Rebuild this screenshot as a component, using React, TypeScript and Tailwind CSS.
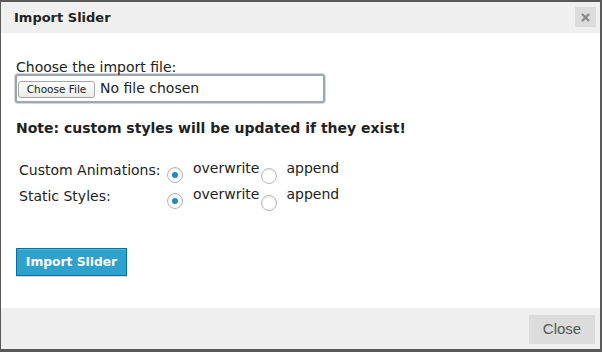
import React from "react";

function Radio({ checked, className = "" }: { checked?: boolean; className?: string }) {
  return (
    <span
      className={
        "flex h-[16px] w-[16px] shrink-0 items-center justify-center rounded-full border border-[#b4b9be] bg-white shadow-[inset_0_1px_2px_rgba(0,0,0,0.1)] " +
        className
      }
    >
      {checked && <span className="h-[6px] w-[6px] rounded-full bg-[#1e8cbe]" />}
    </span>
  );
}

const rows = [
  { label: "Custom Animations:", r2: "mt-[8px]" },
  { label: "Static Styles:", r2: "mt-[9px]" },
];

export default function App() {
  return (
    <div
      className="h-[352px] w-[602px] bg-[#595959] pb-[3px] pl-px pr-[2px] pt-[2px] text-[#222]"
      style={{ fontFamily: '"DejaVu Sans", Verdana, sans-serif' }}
    >
      <div className="flex h-full flex-col bg-white">
        {/* header */}
        <div className="flex h-[31px] items-start justify-between bg-[#f0f0f0] pl-[13px] pr-[4px]">
          <h1 className="mt-[7px] text-[13px] font-bold leading-[17px]">Import Slider</h1>
          <button className="mt-[5px] flex h-[20px] w-[21px] items-center justify-center bg-[#dcdcdc]">
            <svg width="9" height="9" viewBox="0 0 9 9">
              <path d="M1 1 L8 8 M8 1 L1 8" stroke="#8a8a8a" strokeWidth="2.4" strokeLinecap="butt" />
            </svg>
          </button>
        </div>

        {/* body */}
        <div className="flex-1 px-[15px] pt-[27px]">
          <div className="text-[14px] leading-[14px]">Choose the import file:</div>
          <div className="-ml-px flex h-[29px] w-[310px] items-center rounded-[3px] border-2 border-[#9ea6ae] bg-white shadow-[0_0_0_1px_#d3d8dc]">
            <span className="ml-px mt-px flex h-[17px] w-[77px] items-center justify-center rounded-[3px] border border-[#a6a6a6] bg-gradient-to-b from-white to-[#ececec] text-[10.5px] leading-none text-[#222]">
              Choose File
            </span>
            <span className="ml-[5px] text-[14px] leading-[17px]">No file chosen</span>
          </div>

          <p className="mt-[17px] text-[14px] font-bold leading-[17px]">
            Note: custom styles will be updated if they exist!
          </p>

          <div className="mt-[23px] pl-[3px]">
            {rows.map((r) => (
              <div key={r.label} className="flex h-[26px] items-start text-[14px] leading-[17px]">
                <span className="mt-[2px] w-[148px] shrink-0">{r.label}</span>
                <Radio checked className="mt-[7px]" />
                <span className="ml-[10px]">overwrite</span>
                <Radio className={"ml-[2px] " + r.r2} />
                <span className="ml-[9px]">append</span>
              </div>
            ))}
          </div>

          <button className="mt-[36px] h-[28px] w-[111px] border border-[#0074a2] bg-[#2ea2cc] text-[12.3px] font-bold text-white shadow-[0_1px_0_rgba(120,200,230,0.5)_inset,0_1px_0_rgba(0,0,0,0.15)]">
            Import Slider
          </button>
        </div>

        {/* footer */}
        <div className="flex h-[41px] items-start justify-end bg-[#efefef] pr-[5px] pt-[7px]">
          <button
            className="h-[29px] w-[66px] bg-[#dcdcdc] text-[15px] text-[#555]"
            style={{ fontFamily: '"Liberation Sans", Arial, sans-serif' }}
          >
            Close
          </button>
        </div>
      </div>
    </div>
  );
}
